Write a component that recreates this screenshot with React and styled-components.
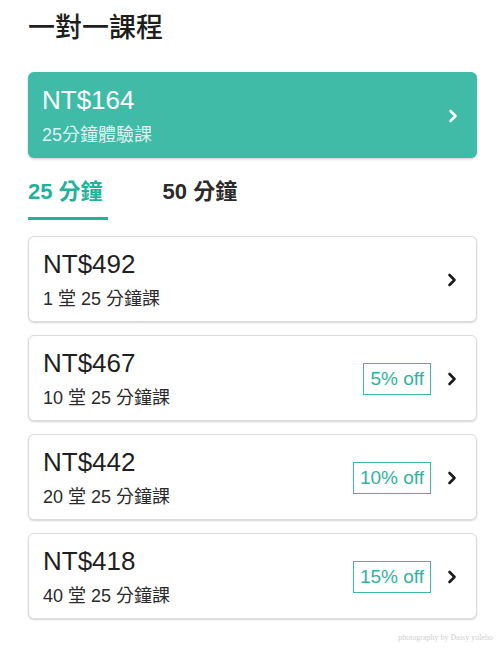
import React, { useState } from 'react';
import styled, { createGlobalStyle } from 'styled-components';

const GlobalStyle = createGlobalStyle`
  html, body {
    margin: 0;
    padding: 0;
    background: #ffffff;
  }
  body {
    font-family: "Liberation Sans", "Noto Sans CJK TC", sans-serif;
    color: #222222;
  }
`;

const Page = styled.div`
  width: 500px;
  box-sizing: border-box;
  padding: 8px 23px 0 28px;
`;

const Title = styled.h1`
  margin: 0 0 28px;
  font-size: 27px;
  line-height: 36px;
  font-weight: 500;
  color: #1e1e1e;
  font-family: "Noto Sans CJK TC", sans-serif;
`;

const TrialCard = styled.div`
  display: flex;
  align-items: center;
  justify-content: space-between;
  height: 86px;
  box-sizing: border-box;
  padding: 13px 19px 11px 14px;
  border-radius: 6px;
  background: #3fbba8;
  box-shadow: 0 1px 3px rgba(0, 0, 0, 0.22);
  color: #ffffff;
`;

const Info = styled.div`
  display: flex;
  flex-direction: column;
  gap: 8px;
`;

const Price = styled.div`
  font-size: 26px;
  line-height: 30px;
  color: ${(p) => (p.$light ? '#ffffff' : '#1f1f1f')};
`;

const Sub = styled.div`
  font-size: 18px;
  line-height: 24px;
  color: ${(p) => (p.$light ? 'rgba(255,255,255,0.85)' : '#2a2a2a')};
`;

const Tabs = styled.div`
  display: flex;
  gap: 55px;
  margin: 21px 0 16px;
`;

const Tab = styled.button`
  appearance: none;
  background: none;
  border: none;
  padding: 0 5px 12px 0;
  border-bottom: 3px solid ${(p) => (p.$active ? '#1fb39c' : 'transparent')};
  font-family: "Liberation Sans", "Noto Sans CJK TC", sans-serif;
  font-size: 22px;
  line-height: 26px;
  font-weight: 700;
  color: ${(p) => (p.$active ? '#1fb39c' : '#2b2b2b')};
  cursor: pointer;
`;

const List = styled.div`
  display: flex;
  flex-direction: column;
  gap: 13px;
`;

const Card = styled.div`
  display: flex;
  align-items: center;
  justify-content: space-between;
  height: 86px;
  box-sizing: border-box;
  padding: 13px 19px 11px 14px;
  border-radius: 6px;
  background: #ffffff;
  border: 1px solid #dcdcdc;
  box-shadow: 0 1px 2px rgba(0, 0, 0, 0.18);
`;

const Right = styled.div`
  display: flex;
  align-items: center;
  gap: 16px;
`;

const Badge = styled.span`
  display: inline-flex;
  align-items: center;
  height: 32px;
  box-sizing: border-box;
  padding: 0 6px;
  border: 1.5px solid #3dbaa7;
  color: #2fb39e;
  font-size: 19px;
`;

const Credit = styled.div`
  margin: 14px -16px 0 0;
  text-align: right;
  font-family: "Liberation Serif", serif;
  font-size: 8px;
  color: #cfcfcf;
`;

const Chevron = ({ color }) => (
  <svg width="10" height="14" viewBox="0 0 10 14">
    <polyline
      points="2.5,2 7.5,7 2.5,12"
      fill="none"
      stroke={color}
      strokeWidth="2.6"
      strokeLinecap="round"
      strokeLinejoin="round"
    />
  </svg>
);

const plans = {
  25: [
    { price: 'NT$492', label: '1 堂 25 分鐘課' },
    { price: 'NT$467', label: '10 堂 25 分鐘課', off: '5% off' },
    { price: 'NT$442', label: '20 堂 25 分鐘課', off: '10% off' },
    { price: 'NT$418', label: '40 堂 25 分鐘課', off: '15% off' },
  ],
  50: [
    { price: 'NT$984', label: '1 堂 50 分鐘課' },
    { price: 'NT$934', label: '10 堂 50 分鐘課', off: '5% off' },
    { price: 'NT$884', label: '20 堂 50 分鐘課', off: '10% off' },
    { price: 'NT$836', label: '40 堂 50 分鐘課', off: '15% off' },
  ],
};

export default function App() {
  const [tab, setTab] = useState(25);

  return (
    <Page>
      <GlobalStyle />
      <Title>一對一課程</Title>
      <TrialCard>
        <Info>
          <Price $light>NT$164</Price>
          <Sub $light>25分鐘體驗課</Sub>
        </Info>
        <Chevron color="#ffffff" />
      </TrialCard>

      <Tabs>
        <Tab $active={tab === 25} onClick={() => setTab(25)}>25 分鐘</Tab>
        <Tab $active={tab === 50} onClick={() => setTab(50)}>50 分鐘</Tab>
      </Tabs>

      <List>
        {plans[tab].map((p) => (
          <Card key={p.price}>
            <Info>
              <Price>{p.price}</Price>
              <Sub>{p.label}</Sub>
            </Info>
            <Right>
              {p.off && <Badge>{p.off}</Badge>}
              <Chevron color="#1a1a1a" />
            </Right>
          </Card>
        ))}
      </List>

      <Credit>photography by Daisy yoleho</Credit>
    </Page>
  );
}
